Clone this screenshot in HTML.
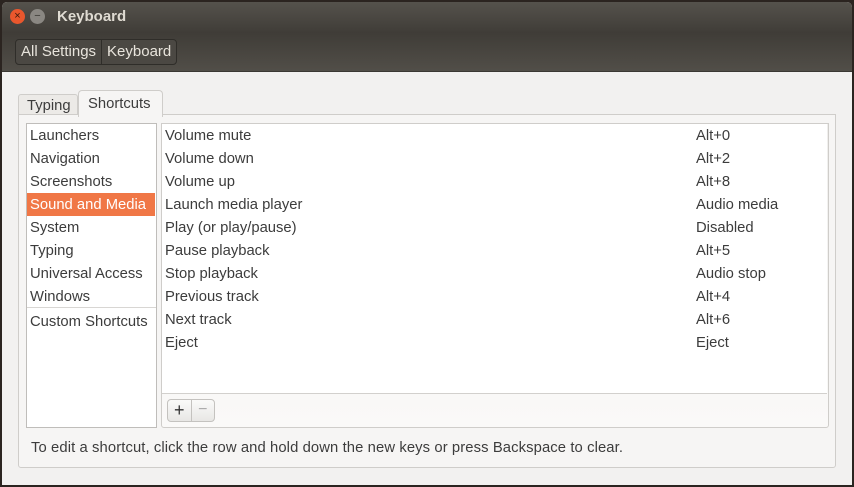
<!DOCTYPE html>
<html><head><style>
*{margin:0;padding:0;box-sizing:border-box}
body{width:854px;height:487px;background:#2b2420;font-family:"Liberation Sans","DejaVu Sans",sans-serif;font-size:14px;color:#3c3c3c;position:relative;overflow:hidden}
.win{position:absolute;left:2px;top:2px;width:850px;height:483px;background:#f2f1f0;border-radius:5px 5px 0 0;overflow:hidden}
.title{position:absolute;left:0;top:0;width:850px;height:30px;background:linear-gradient(#55524c,#403d38);}
.tb{position:absolute;left:0;top:30px;width:850px;height:40px;background:linear-gradient(#3f3c37,#514e48);border-bottom:1px solid #3a3833}
.t{position:absolute;left:55px;top:6px;color:#dfdbd2;font-weight:bold;font-size:15px}
.btn{position:absolute;top:7px;width:15px;height:15px;border-radius:50%;font-size:11px;text-align:center;line-height:15px}
.crumb{position:absolute;left:13px;top:7px;height:26px;border:1px solid #2f2d29;border-radius:4px;background:#4b4843;display:flex}
.crumb div{color:#e8e4dc;padding:0 5px;line-height:24px;font-size:15px}
.abs{position:absolute}
.row{position:absolute;height:23px;line-height:25px;font-size:14.8px}
</style></head><body>
<div class="win">
<div class="title">
<div class="btn" style="left:8px;background:#e9572d;color:#3a1a0c">×</div>
<div class="btn" style="left:28px;background:#8a8782;color:#3a3833">−</div>
<div class="t">Keyboard</div>
</div>
<div class="tb"><div class="crumb"><div style="border-right:1px solid #2f2d29">All Settings</div><div>Keyboard</div></div></div>
<div class="abs" style="left:16px;top:92px;height:21px;width:60px;border:1px solid #cfcdca;border-bottom:none;border-radius:3px 3px 0 0;background:#eceae7;padding-left:8px;line-height:23px;font-size:14.8px">Typing</div>
<div class="abs" style="left:76px;top:88px;height:27px;width:85px;border:1px solid #cfcdca;border-bottom:none;border-radius:4px 4px 0 0;background:#f6f5f4;padding-left:9px;line-height:27px;font-size:14.8px;z-index:2">Shortcuts</div>
<div class="abs" style="left:16px;top:112px;width:818px;height:354px;border:1px solid #cfcdca;border-radius:0 0 3px 3px;background:#f6f5f4"></div>
<div class="abs" style="left:24px;top:121px;width:131px;height:305px;border:1px solid #bfbdba;background:#fff"></div>
<div class="abs" style="left:25px;top:191px;width:128px;height:23px;background:#f07746"></div>
<div class="abs" style="left:25px;top:305px;width:129px;height:1px;background:#d8d6d3"></div>
<div class="row" style="left:28px;top:122px">Launchers</div>
<div class="row" style="left:28px;top:145px">Navigation</div>
<div class="row" style="left:28px;top:168px">Screenshots</div>
<div class="row" style="left:28px;top:191px;color:#fff">Sound and Media</div>
<div class="row" style="left:28px;top:214px">System</div>
<div class="row" style="left:28px;top:237px">Typing</div>
<div class="row" style="left:28px;top:260px">Universal Access</div>
<div class="row" style="left:28px;top:283px">Windows</div>
<div class="row" style="left:28px;top:308px">Custom Shortcuts</div>
<div class="abs" style="left:159px;top:121px;width:668px;height:305px;border:1px solid #cfcdca;border-radius:0 0 3px 3px;background:linear-gradient(#efeeec,#faf9f8)"></div>
<div class="abs" style="left:160px;top:122px;width:665px;height:270px;background:#fff;border-bottom:1px solid #d2d0cd"></div>
<div class="row" style="left:163px;top:122px">Volume mute</div><div class="row" style="left:694px;top:122px">Alt+0</div>
<div class="row" style="left:163px;top:145px">Volume down</div><div class="row" style="left:694px;top:145px">Alt+2</div>
<div class="row" style="left:163px;top:168px">Volume up</div><div class="row" style="left:694px;top:168px">Alt+8</div>
<div class="row" style="left:163px;top:191px">Launch media player</div><div class="row" style="left:694px;top:191px">Audio media</div>
<div class="row" style="left:163px;top:214px">Play (or play/pause)</div><div class="row" style="left:694px;top:214px">Disabled</div>
<div class="row" style="left:163px;top:237px">Pause playback</div><div class="row" style="left:694px;top:237px">Alt+5</div>
<div class="row" style="left:163px;top:260px">Stop playback</div><div class="row" style="left:694px;top:260px">Audio stop</div>
<div class="row" style="left:163px;top:283px">Previous track</div><div class="row" style="left:694px;top:283px">Alt+4</div>
<div class="row" style="left:163px;top:306px">Next track</div><div class="row" style="left:694px;top:306px">Alt+6</div>
<div class="row" style="left:163px;top:329px">Eject</div><div class="row" style="left:694px;top:329px">Eject</div>
<div class="abs" style="left:165px;top:397px;width:48px;height:23px;border:1px solid #c4c2bf;border-radius:4px;background:linear-gradient(#fafaf9,#e8e7e5);display:flex">
<div style="width:24px;border-right:1px solid #c4c2bf;text-align:center;line-height:20px;font-size:18px;color:#333">+</div>
<div style="width:23px;text-align:center;line-height:20px;font-size:16px;color:#aaa">−</div></div>
<div class="row" style="left:29px;top:434px;letter-spacing:0.1px">To edit a shortcut, click the row and hold down the new keys or press Backspace to clear.</div>
</div>
</body></html>
